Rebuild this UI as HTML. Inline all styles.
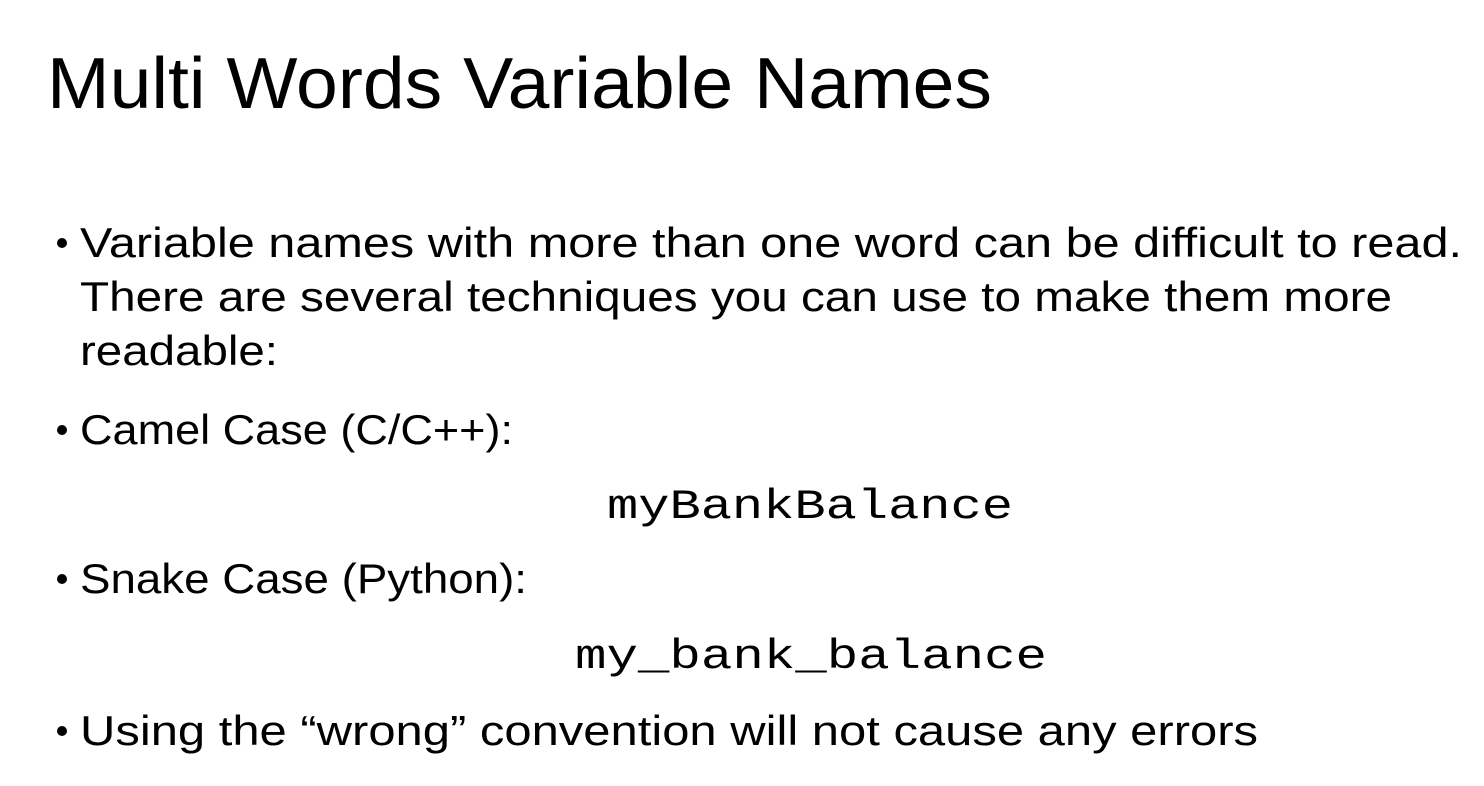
<!DOCTYPE html>
<html><head><meta charset="utf-8"><style>
html,body{margin:0;padding:0;background:#fff;}
svg{display:block;}
</style></head><body>
<svg width="1484" height="786" viewBox="0 0 1484 786" xmlns="http://www.w3.org/2000/svg">
<rect width="1484" height="786" fill="#fff"/>
<g font-family="'Liberation Sans', sans-serif" fill="#000">
<text x="47" y="108" font-size="72" textLength="945" lengthAdjust="spacingAndGlyphs">Multi Words Variable Names</text>
<g font-size="42">
<circle cx="62" cy="243" r="5"/>
<text x="80" y="257" textLength="1382" lengthAdjust="spacingAndGlyphs">Variable names with more than one word can be difficult to read.</text>
<text x="80" y="311" textLength="1312" lengthAdjust="spacingAndGlyphs">There are several techniques you can use to make them more</text>
<text x="80" y="365" textLength="198" lengthAdjust="spacingAndGlyphs">readable:</text>
<circle cx="62" cy="430" r="5"/>
<text x="80" y="444" textLength="433" lengthAdjust="spacingAndGlyphs">Camel Case (C/C++):</text>
<circle cx="62" cy="579" r="5"/>
<text x="80" y="593" textLength="447" lengthAdjust="spacingAndGlyphs">Snake Case (Python):</text>
<circle cx="62" cy="731" r="5"/>
<text x="80" y="745" textLength="1178" lengthAdjust="spacingAndGlyphs">Using the “wrong” convention will not cause any errors</text>
</g>
<g font-family="'Liberation Mono', monospace" font-size="42">
<text x="607" y="518" textLength="406" lengthAdjust="spacingAndGlyphs">myBankBalance</text>
<text x="575" y="668" textLength="472" lengthAdjust="spacingAndGlyphs">my_bank_balance</text>
</g>
</g>
</svg>
</body></html>
